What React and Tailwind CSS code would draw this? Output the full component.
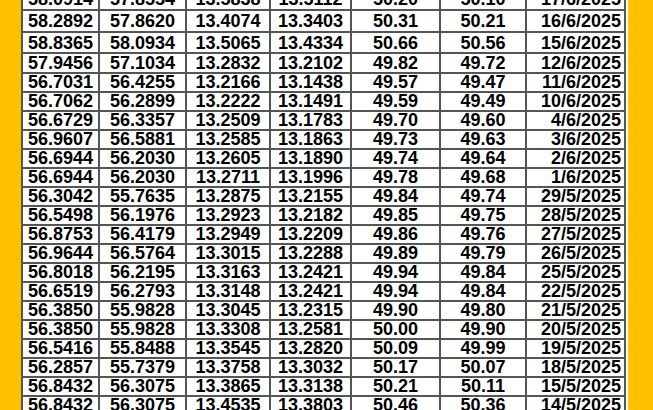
const rows = [
  ["58.0914", "57.8554", "13.5838", "13.5112", "50.20", "50.10", "17/6/2025", 22],
  ["58.2892", "57.8620", "13.4074", "13.3403", "50.31", "50.21", "16/6/2025", 22],
  ["58.8365", "58.0934", "13.5065", "13.4334", "50.66", "50.56", "15/6/2025", 21],
  ["57.9456", "57.1034", "13.2832", "13.2102", "49.82", "49.72", "12/6/2025", 19],
  ["56.7031", "56.4255", "13.2166", "13.1438", "49.57", "49.47", "11/6/2025", 19],
  ["56.7062", "56.2899", "13.2222", "13.1491", "49.59", "49.49", "10/6/2025", 19],
  ["56.6729", "56.3357", "13.2509", "13.1783", "49.70", "49.60", "4/6/2025", 19],
  ["56.9607", "56.5881", "13.2585", "13.1863", "49.73", "49.63", "3/6/2025", 19],
  ["56.6944", "56.2030", "13.2605", "13.1890", "49.74", "49.64", "2/6/2025", 19],
  ["56.6944", "56.2030", "13.2711", "13.1996", "49.78", "49.68", "1/6/2025", 19],
  ["56.3042", "55.7635", "13.2875", "13.2155", "49.84", "49.74", "29/5/2025", 19],
  ["56.5498", "56.1976", "13.2923", "13.2182", "49.85", "49.75", "28/5/2025", 19],
  ["56.8753", "56.4179", "13.2949", "13.2209", "49.86", "49.76", "27/5/2025", 19],
  ["56.9644", "56.5764", "13.3015", "13.2288", "49.89", "49.79", "26/5/2025", 19],
  ["56.8018", "56.2195", "13.3163", "13.2421", "49.94", "49.84", "25/5/2025", 19],
  ["56.6519", "56.2793", "13.3148", "13.2421", "49.94", "49.84", "22/5/2025", 19],
  ["56.3850", "55.9828", "13.3045", "13.2315", "49.90", "49.80", "21/5/2025", 19],
  ["56.3850", "55.9828", "13.3308", "13.2581", "50.00", "49.90", "20/5/2025", 19],
  ["56.5416", "55.8488", "13.3545", "13.2820", "50.09", "49.99", "19/5/2025", 19],
  ["56.2857", "55.7379", "13.3758", "13.3032", "50.17", "50.07", "18/5/2025", 19],
  ["56.8432", "56.3075", "13.3865", "13.3138", "50.21", "50.11", "15/5/2025", 19],
  ["56.8432", "56.3075", "13.4535", "13.3803", "50.46", "50.36", "14/5/2025", 19],
];

const Cell = ({ children, last }) => (
  <div
    className={
      "flex items-center border-r-2 border-b-2 border-[#555555] " +
      (last ? "justify-end pr-[3px]" : "justify-center")
    }
  >
    {children}
  </div>
);

export default function App() {
  return (
    <div className="flex h-[410px] w-[653px] overflow-hidden bg-[#ffc000]">
      <div className="w-[21px] shrink-0" />
      <div className="-mt-[11px] w-[607px] shrink-0 self-start border-l-2 border-[#555555] bg-white font-['Liberation_Sans',Arial,sans-serif] text-[18px] font-bold leading-none text-black">
        {rows.map((r) => (
          <div
            key={r[6]}
            className="grid grid-cols-[77px_87px_84px_81px_89px_86px_99px]"
            style={{ height: r[7] }}
          >
            {r.slice(0, 7).map((v, i) => (
              <Cell key={i} last={i === 6}>
                {v}
              </Cell>
            ))}
          </div>
        ))}
      </div>
      <div className="flex-1" />
    </div>
  );
}
